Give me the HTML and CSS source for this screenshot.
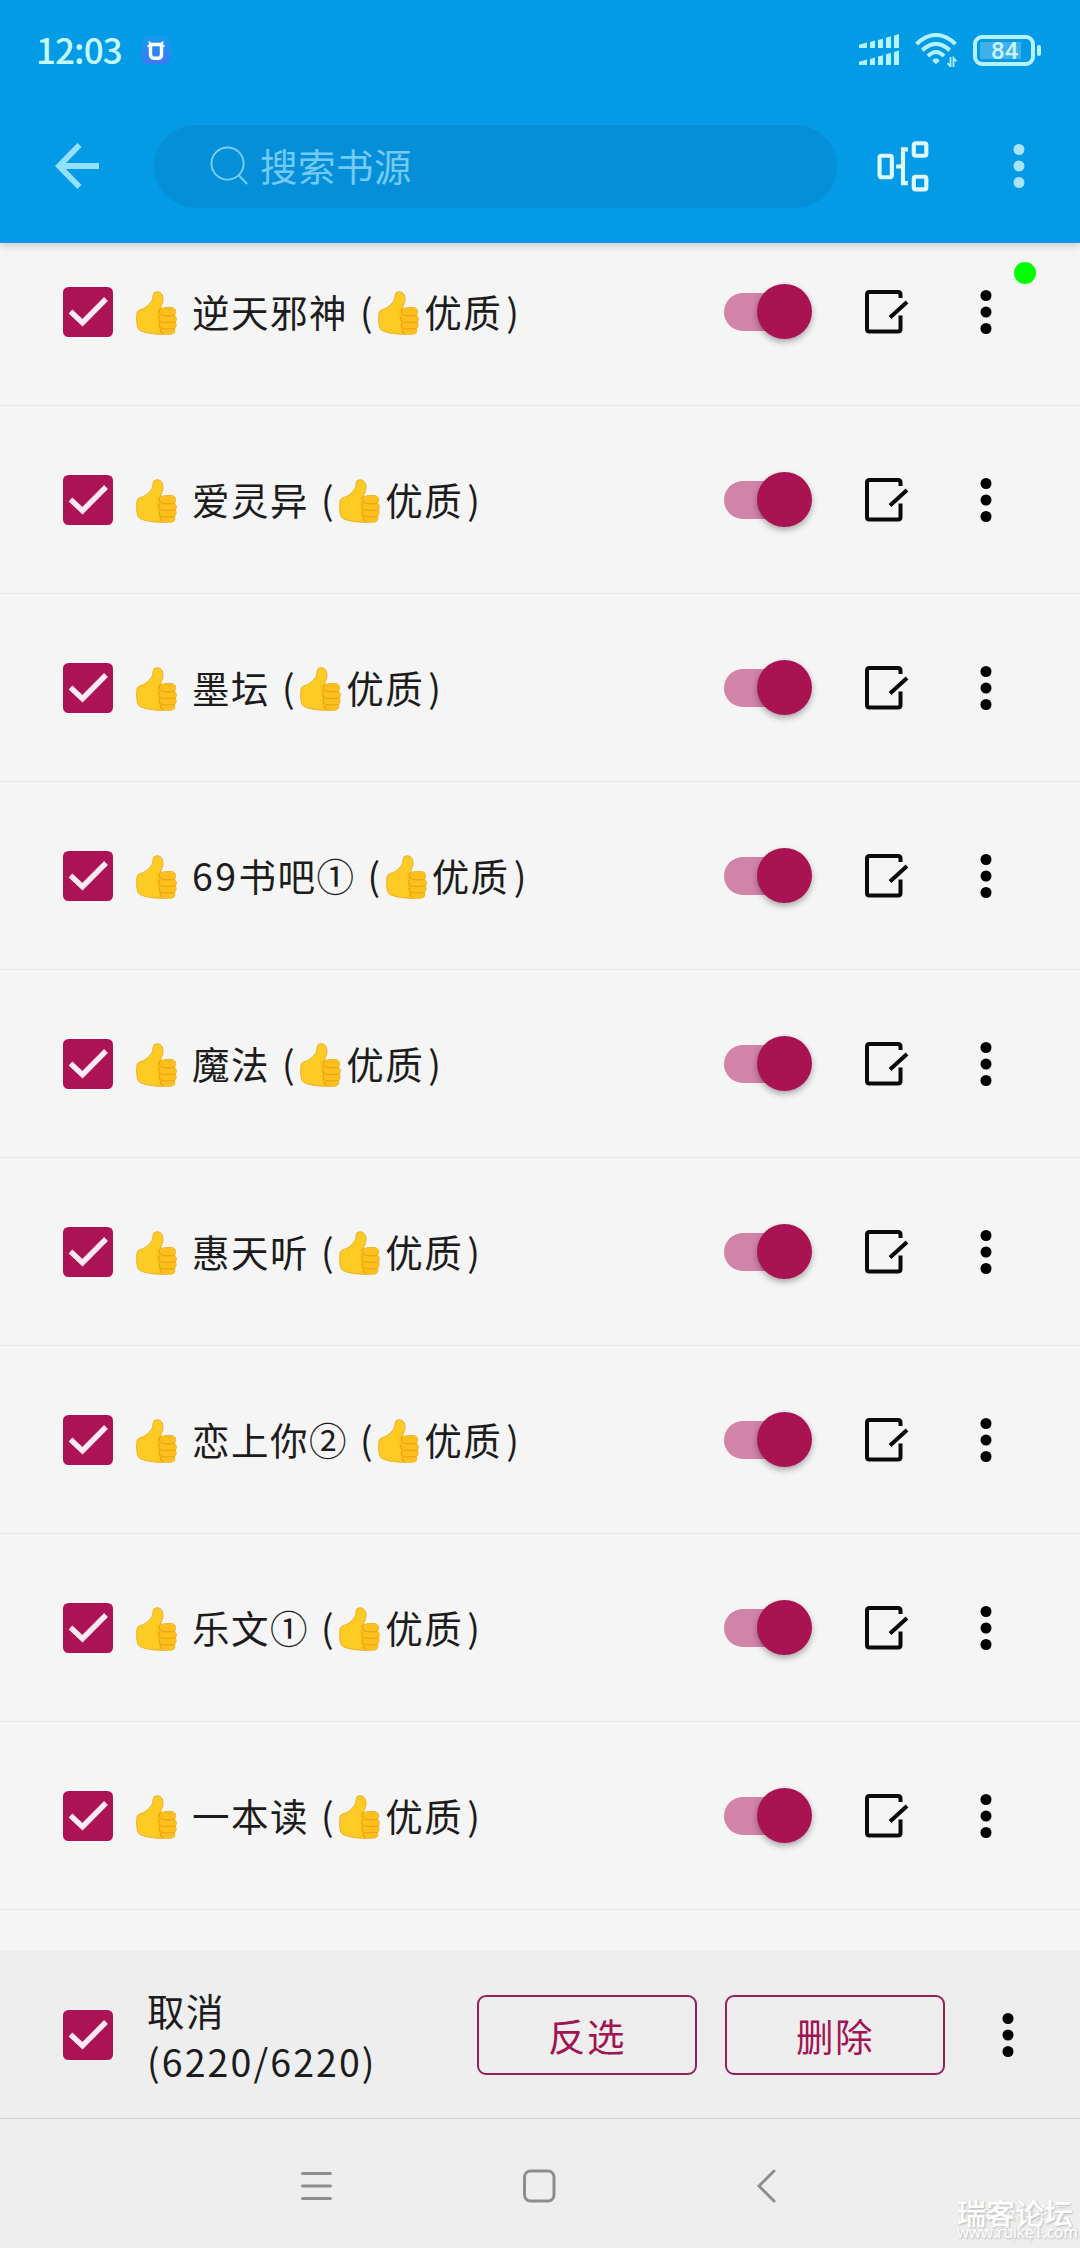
FILE: index.html
```html
<!DOCTYPE html>
<html lang="zh-CN">
<head>
<meta charset="utf-8">
<title>书源管理</title>
<link rel="stylesheet" href="styles.css">
</head>
<body>
<svg class="defs" aria-hidden="true">
  <symbol id="check" viewBox="0 0 50 50">
    <rect width="50" height="50" rx="5.5" fill="#ab1355"/>
    <path d="M7.500 24.500 19.500 35.700 43 12" fill="none" stroke="#fdeaf6" stroke-width="5.400"/>
  </symbol>
  <symbol id="thumb" viewBox="0 0 41 44">
    <path d="M1 22C1.500 19 5 18.500 7.500 17.500 11.500 15.500 14 12.500 16 9.500 17.500 7 16 1 20.500.8 25 .5 27 4 27 8 27 12 25 14.500 24.500 17.500 29 16.500 36 15.500 38.500 17.800 40.500 20 39.500 23 38.500 24.500 40.700 26 41 29 39.300 31 40.800 33 40 36 38.500 37.500 39.500 40 38.300 42.500 36 43 29 43.800 17 43.200 12 42 8 41 4 40.500 2 37.500.6 34 .4 26 1 22Z" fill="#fecb24" stroke="#eda81c" stroke-width=".9"/>
    <path d="M20 19C23 24 21 37 24 42.500L36 42.500C38 42 39 40 38 37.500 40.500 35 40 33 39 31 41 28 40 26 38.300 24.500 39.500 21 39 18 36 17.300 32 16.500 28 17.500 24.500 18Z" fill="#fdbf1c"/>
    <path d="M24.500 17.500C22.500 19.500 23 23 26 24.300 30 25 34 25 38.500 24.500M23.500 24.500C22 27 22.500 30 25.500 31 30 31.800 35 31.500 39.300 31M24 31.500C22.500 34 23 36.500 26 37.500 30 38.300 34 38 38.500 37.500M25 38C23.500 40 25 42 27 42.700" fill="none" stroke="#e9a015" stroke-width="1.100"/>
  </symbol>
  <symbol id="edit" viewBox="0 0 44 44">
    <path d="M35.500 8V4.500Q35.500 2 33 2H4.500Q2 2 2 4.500V39Q2 41.500 4.500 41.500H33Q35.500 41.500 35.500 39V25.500M25 27.500 42 12" fill="none" stroke="#0a0a0a" stroke-width="4"/>
  </symbol>
  <symbol id="dots" viewBox="0 0 12 46">
    <circle cx="6" cy="6.500" r="5.500"/><circle cx="6" cy="23" r="5.500"/><circle cx="6" cy="39.500" r="5.500"/>
  </symbol>
</svg>

<header class="appbar">
  <div class="status">
    <span class="clock">12:03</span>
    <svg class="app-badge" viewBox="0 0 28 28">
      <defs><linearGradient id="g" x2="0" y2="1"><stop stop-color="#139cf0"/><stop offset="1" stop-color="#3f78f4"/></linearGradient></defs>
      <rect width="28" height="28" rx="5" fill="url(#g)"/>
      <path d="M7 5.500 9 9M21 5.500 19 9M5.500 10H8M20 10H22.500" stroke="#fff" stroke-width="1.800"/>
      <path d="M8.500 8.500H19.500V18Q19.500 22.300 16 22.300H12Q8.500 22.300 8.500 18Z" fill="none" stroke="#fff" stroke-width="3.400"/>
    </svg>
    <div class="indicators">
      <svg class="signal" viewBox="0 0 40 34" preserveAspectRatio="none" fill="#b5f2ff">
        <path d="M0 11.500 8 9V15H0ZM11 8.500 16 7V15H11ZM19 6.500 24 5V15H19ZM27 4 32 2.500V15H27ZM35 1.500 40 0V15H35Z"/>
        <path d="M0 29.500 8 27V33H0ZM11 26.500 16 25V33H11ZM19 24 24 22.500V33H19ZM27 21.500 32 20V33H27ZM35 19 40 17.500V33H35Z"/>
      </svg>
      <svg class="wifi" viewBox="0 0 42 34" fill="none" stroke="#b5f2ff" stroke-width="4">
        <path d="M1.500 11Q21-7 40.500 11M7.300 17.200Q21 4.500 34.700 17.200M13 23Q21 15 29 23"/>
        <path d="M21 25.500Q24.500 25.500 24.500 28 21 31.500 21 31 21 31.500 17.500 28 17.500 25.500 21 25.500Z" fill="#b5f2ff" stroke="none"/>
        <path d="M35.500 24V33.500L32.500 30M38.500 34V25L41.500 28.500" stroke-width="1.800"/>
      </svg>
      <div class="battery"><span class="level">84</span></div>
    </div>
  </div>
  <div class="toolbar">
    <svg class="back" viewBox="0 0 44 46" fill="none" stroke="#96e0ff" stroke-width="5.800"><path d="M44 23H4M24.500 2 4 23 24.500 44"/></svg>
    <div class="search">
      <svg class="lens" viewBox="0 0 40 40" fill="none" stroke="#7acdf4" stroke-width="2"><circle cx="18" cy="18" r="16.500"/><path d="M29.500 30 38 39"/></svg>
      <span class="hint">搜索书源</span>
    </div>
    <svg class="group" viewBox="0 0 52 52" fill="none" stroke="#dff8ff" stroke-width="4.200"><rect x="2.100" y="15" width="12.500" height="22" rx="2"/><rect x="37" y="2.300" width="12.800" height="12.800" rx="2"/><rect x="37" y="36.500" width="12.800" height="12.800" rx="2"/><path d="M31 8.500H26V43H31M19 26H26"/></svg>
    <svg class="dots light"><use href="#dots"/></svg>
  </div>
</header>

<main class="list">
  <div class="row"><svg class="check"><use href="#check"/></svg><div class="name"><svg class="thumb"><use href="#thumb"/></svg><span class="title">逆天邪神</span><span class="paren">(</span><svg class="thumb"><use href="#thumb"/></svg><span class="tag">优质</span><span class="close">)</span></div><div class="switch"></div><svg class="edit"><use href="#edit"/></svg><svg class="dots"><use href="#dots"/></svg></div>
  <div class="row"><svg class="check"><use href="#check"/></svg><div class="name"><svg class="thumb"><use href="#thumb"/></svg><span class="title">爱灵异</span><span class="paren">(</span><svg class="thumb"><use href="#thumb"/></svg><span class="tag">优质</span><span class="close">)</span></div><div class="switch"></div><svg class="edit"><use href="#edit"/></svg><svg class="dots"><use href="#dots"/></svg></div>
  <div class="row"><svg class="check"><use href="#check"/></svg><div class="name"><svg class="thumb"><use href="#thumb"/></svg><span class="title">墨坛</span><span class="paren">(</span><svg class="thumb"><use href="#thumb"/></svg><span class="tag">优质</span><span class="close">)</span></div><div class="switch"></div><svg class="edit"><use href="#edit"/></svg><svg class="dots"><use href="#dots"/></svg></div>
  <div class="row"><svg class="check"><use href="#check"/></svg><div class="name"><svg class="thumb"><use href="#thumb"/></svg><span class="title"><span class="digits">69</span>书吧①</span><span class="paren">(</span><svg class="thumb"><use href="#thumb"/></svg><span class="tag">优质</span><span class="close">)</span></div><div class="switch"></div><svg class="edit"><use href="#edit"/></svg><svg class="dots"><use href="#dots"/></svg></div>
  <div class="row"><svg class="check"><use href="#check"/></svg><div class="name"><svg class="thumb"><use href="#thumb"/></svg><span class="title">魔法</span><span class="paren">(</span><svg class="thumb"><use href="#thumb"/></svg><span class="tag">优质</span><span class="close">)</span></div><div class="switch"></div><svg class="edit"><use href="#edit"/></svg><svg class="dots"><use href="#dots"/></svg></div>
  <div class="row"><svg class="check"><use href="#check"/></svg><div class="name"><svg class="thumb"><use href="#thumb"/></svg><span class="title">惠天听</span><span class="paren">(</span><svg class="thumb"><use href="#thumb"/></svg><span class="tag">优质</span><span class="close">)</span></div><div class="switch"></div><svg class="edit"><use href="#edit"/></svg><svg class="dots"><use href="#dots"/></svg></div>
  <div class="row"><svg class="check"><use href="#check"/></svg><div class="name"><svg class="thumb"><use href="#thumb"/></svg><span class="title">恋上你②</span><span class="paren">(</span><svg class="thumb"><use href="#thumb"/></svg><span class="tag">优质</span><span class="close">)</span></div><div class="switch"></div><svg class="edit"><use href="#edit"/></svg><svg class="dots"><use href="#dots"/></svg></div>
  <div class="row"><svg class="check"><use href="#check"/></svg><div class="name"><svg class="thumb"><use href="#thumb"/></svg><span class="title">乐文①</span><span class="paren">(</span><svg class="thumb"><use href="#thumb"/></svg><span class="tag">优质</span><span class="close">)</span></div><div class="switch"></div><svg class="edit"><use href="#edit"/></svg><svg class="dots"><use href="#dots"/></svg></div>
  <div class="row"><svg class="check"><use href="#check"/></svg><div class="name"><svg class="thumb"><use href="#thumb"/></svg><span class="title">一本读</span><span class="paren">(</span><svg class="thumb"><use href="#thumb"/></svg><span class="tag">优质</span><span class="close">)</span></div><div class="switch"></div><svg class="edit"><use href="#edit"/></svg><svg class="dots"><use href="#dots"/></svg></div>
  <i class="online"></i>
</main>

<section class="actions">
  <svg class="check"><use href="#check"/></svg>
  <div class="count">取消<br><span class="num">(6220/6220)</span></div>
  <button class="btn">反选</button>
  <button class="btn">删除</button>
  <svg class="dots"><use href="#dots"/></svg>
</section>

<nav class="navbar">
  <svg class="nav-icon" viewBox="0 0 34 34"><path d="M3.500 4.500H31.500M3.500 17H31.500M3.500 29.500H31.500"/></svg>
  <svg class="nav-icon" viewBox="0 0 34 34"><rect x="2.500" y="2" width="29.500" height="30" rx="6"/></svg>
  <svg class="nav-icon" viewBox="0 0 34 34"><path d="M29 2 14 17 29 32"/></svg>
  <div class="mark">
    <span class="mark-sub">吾爱破解论坛</span>
    <span class="mark-name">瑞客论坛</span>
    <span class="mark-url under">www.52pojie.com</span>
    <span class="mark-url">www.ruike1.com</span>
  </div>
</nav>
</body>
</html>
```
FILE: styles.css
```css
* { box-sizing: border-box; }
body {
  margin: 0;
  width: 1080px;
  height: 2248px;
  display: flex;
  flex-direction: column;
  overflow: hidden;
  background: #f5f5f5;
  color: #1c1c1c;
  font: 37.5px/51px "Noto Sans CJK SC", sans-serif;
}
svg { display: block; flex: none; }
.defs { position: absolute; width: 0; height: 0; }

.appbar {
  position: relative;
  z-index: 1;
  flex: none;
  height: 243px;
  background: #039be6;
  box-shadow: 0 2px 9px rgba(0, 0, 0, .2);
}
.status { display: flex; align-items: center; height: 100px; padding: 0 39px 0 36px; }
.clock { width: 106px; margin-top: -3px; font-size: 35px; font-weight: 500; color: #c4fbff; letter-spacing: -.9px; }
.app-badge { width: 28px; height: 28px; }
.indicators { display: flex; align-items: center; margin-left: auto; gap: 16px; }
.signal { width: 40px; height: 32px; }
.wifi { width: 42px; height: 34px; }
.battery {
  position: relative;
  width: 62px;
  height: 31px;
  margin-right: 6px;
  padding: 3px;
  border: 4px solid #b5f2ff;
  border-radius: 9px;
}
.battery::after {
  content: "";
  position: absolute;
  top: 6px;
  right: -10px;
  width: 4px;
  height: 11px;
  border-radius: 2px;
  background: #b5f2ff;
}
.level {
  display: block;
  width: 41px;
  height: 17px;
  padding-left: 11px;
  background: #3fb0ec;
  color: #c9f7ff;
  font: 500 24px/19px Roboto, sans-serif;
}
.toolbar { display: flex; align-items: center; height: 132px; padding-left: 55px; }
.back { width: 44px; height: 46px; }
.search {
  display: flex;
  align-items: center;
  width: 683px;
  height: 83px;
  margin-left: 55px;
  padding-left: 56px;
  border-radius: 42px;
  background: #048fd8;
  color: #72caf5;
  letter-spacing: .5px;
}
.hint { margin-top: -4px; }
.lens { width: 39px; height: 39px; margin: -2px 11px 0 0; }
.group { width: 52px; height: 51px; margin-left: 40px; }
.dots { width: 12px; height: 46px; fill: #000; }
.light { margin-left: 84px; fill: #a9e3fc; }

.list { position: relative; flex: none; height: 1707px; overflow: hidden; }
.row {
  display: flex;
  align-items: center;
  height: 188px;
  padding: 1px 88px 0 63px;
  border-bottom: 1px solid #e6e6e6;
}
.row:first-child { margin-top: -25px; }
.check { width: 50px; height: 50px; }
.name { display: flex; align-items: center; width: 587px; margin: 0 1px 0 23px; letter-spacing: 1.5px; }
.title, .paren, .tag, .close { margin-top: -3px; }
.thumb { width: 41px; height: 44px; margin-top: 2px; }
.title { margin-left: 15px; }
.digits { letter-spacing: 2.4px; }
.paren { margin-left: 12px; margin-right: 4px; }
.tag { margin-left: 5px; }
.close { margin-left: 4px; }
.switch { position: relative; width: 88px; height: 38px; flex: none; }
.switch::before {
  content: "";
  position: absolute;
  inset: 0 14px 0 0;
  border-radius: 19px;
  background: #d183a8;
}
.switch::after {
  content: "";
  position: absolute;
  top: -9px;
  right: 0;
  width: 55px;
  height: 55px;
  border-radius: 50%;
  background: #a91351;
  box-shadow: 0 3px 6px rgba(0, 0, 0, .32);
}
.edit { width: 44px; height: 44px; margin: 0 71px 0 53px; }
.online {
  position: absolute;
  left: 1014px;
  top: 19px;
  width: 22px;
  height: 22px;
  border-radius: 50%;
  background: #0f0;
}

.actions {
  display: flex;
  align-items: center;
  flex: none;
  height: 169px;
  padding: 1px 66px 0 63px;
  border-bottom: 1px solid #cdd0ce;
  background: #eee;
}
.count { width: 330px; margin-left: 34px; letter-spacing: 1.4px; }
.num { letter-spacing: 2.1px; }
.btn {
  width: 220px;
  height: 80px;
  margin: 0 28px 0 0;
  padding: 0;
  border: 2px solid #94215a;
  border-radius: 9px;
  background: none;
  color: #a01552;
  font: inherit;
  letter-spacing: 1.5px;
}
.actions .dots { margin-left: 29px; }

.navbar {
  position: relative;
  display: flex;
  flex: 1;
  align-items: flex-start;
  gap: 189px;
  padding: 50px 0 0 299px;
  background: #eee;
}
.nav-icon { width: 34px; height: 34px; fill: none; stroke: #8e8e8e; stroke-width: 3; stroke-linecap: round; }
.mark {
  position: absolute;
  right: 4px;
  bottom: 4px;
  width: 120px;
  height: 48px;
  color: #fff;
  text-shadow: 1px 1px 2px #b8b8b8;
  white-space: nowrap;
}
.mark span { position: absolute; }
.mark-name { left: 1px; top: 0; font-size: 29px; line-height: 32px; font-weight: 500; }
.mark-sub { left: 9px; top: 4px; font-size: 17px; line-height: 24px; opacity: .8; }
.mark-url { left: 1px; top: 26px; font: 15.5px/20px "Open Sans", sans-serif; }
.mark .under { opacity: .6; font-size: 14.5px; }
```
